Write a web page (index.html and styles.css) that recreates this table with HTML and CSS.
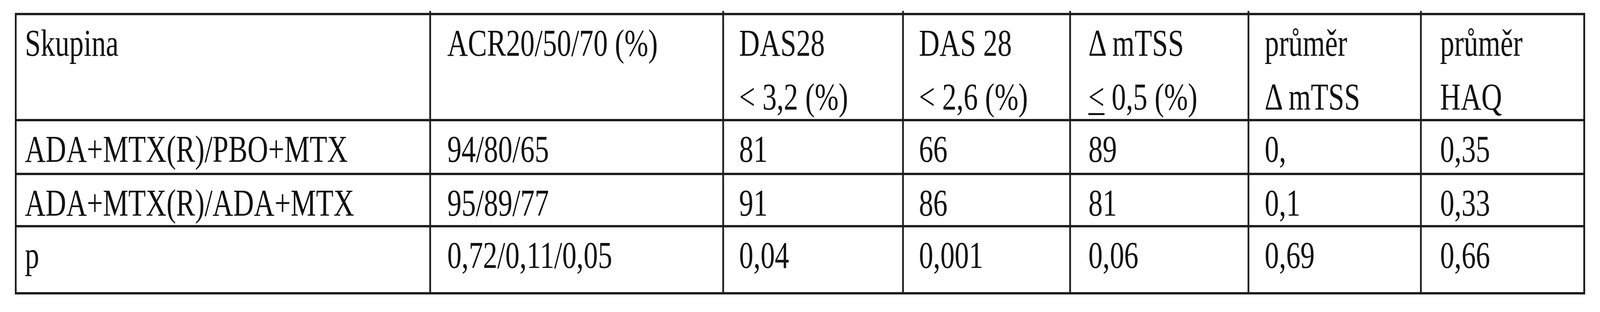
FILE: index.html
```html
<!DOCTYPE html>
<html lang="cs">
<head>
<meta charset="utf-8">
<title>Tabulka</title>
<link rel="stylesheet" href="styles.css">
</head>
<body>
<div class="frame">
<div class="tbl" role="table">
  <div class="c c1 h" role="columnheader">Skupina</div>
  <div class="c c2 h" role="columnheader">ACR20/50/70 (%)</div>
  <div class="c c3 h" role="columnheader">DAS28<br>&lt; 3,2 (%)</div>
  <div class="c c4 h" role="columnheader">DAS 28<br>&lt; 2,6 (%)</div>
  <div class="c c5 h" role="columnheader">Δ mTSS<br><span class="le">&lt;</span> 0,5 (%)</div>
  <div class="c c6 h" role="columnheader">průměr<br>Δ mTSS</div>
  <div class="c c7 h" role="columnheader">průměr<br>HAQ</div>

  <div class="c c1" role="cell">ADA+MTX(R)/PBO+MTX</div>
  <div class="c c2" role="cell">94/80/65</div>
  <div class="c c3" role="cell">81</div>
  <div class="c c4" role="cell">66</div>
  <div class="c c5" role="cell">89</div>
  <div class="c c6" role="cell">0,</div>
  <div class="c c7" role="cell">0,35</div>

  <div class="c c1" role="cell">ADA+MTX(R)/ADA+MTX</div>
  <div class="c c2" role="cell">95/89/77</div>
  <div class="c c3" role="cell">91</div>
  <div class="c c4" role="cell">86</div>
  <div class="c c5" role="cell">81</div>
  <div class="c c6" role="cell">0,1</div>
  <div class="c c7" role="cell">0,33</div>

  <div class="c c1" role="cell">p</div>
  <div class="c c2" role="cell">0,72/0,11/0,05</div>
  <div class="c c3" role="cell">0,04</div>
  <div class="c c4" role="cell">0,001</div>
  <div class="c c5" role="cell">0,06</div>
  <div class="c c6" role="cell">0,69</div>
  <div class="c c7" role="cell">0,66</div>
</div>
</div>
</body>
</html>
```
FILE: styles.css
```css
html, body {
  margin: 0;
  padding: 0;
  background: #ffffff;
}

body {
  font-family: "Liberation Serif", "Times New Roman", serif;
  color: #111111;
  overflow: hidden;
}

.frame {
  width: 100vw;
  height: 800px;
  overflow: hidden;
}

/* Layout is designed for a 5428px wide frame; narrower frames
   get the same picture compressed horizontally. */
.tbl {
  display: inline-grid;
  grid-template-columns: 1400px 988px 604px 561px 599px 579px 548px;
  grid-template-rows: 266px 132px 128px 166px;
  gap: 6px;
  padding: 6px;
  margin: 33px 0 0 50px;
  background: #1e1e1e;
  transform-origin: 0 0;
}

@media (max-width: 5427px) {
  .tbl {
    transform: scaleX(0.754606);
    margin-left: 37.73px;
  }
}

.c {
  background: #ffffff;
  font-size: 97px;
  line-height: 138px;
  padding-top: 3px;
  white-space: nowrap;
}

.h {
  position: relative;
}

.h:not(.c1)::before {
  content: "";
  position: absolute;
  top: -11px;
  left: -6px;
  width: 6px;
  height: 5px;
  background: #1e1e1e;
}

.c1 { padding-left: 28px; }
.c2 { padding-left: 55px; }
.c3 { padding-left: 51px; }
.c4 { padding-left: 51px; }
.c5 { padding-left: 59px; }
.c6 { padding-left: 52px; }
.c7 { padding-left: 62px; }

.le {
  text-decoration: underline;
  text-decoration-thickness: 5px;
  text-underline-offset: 9px;
}
```
